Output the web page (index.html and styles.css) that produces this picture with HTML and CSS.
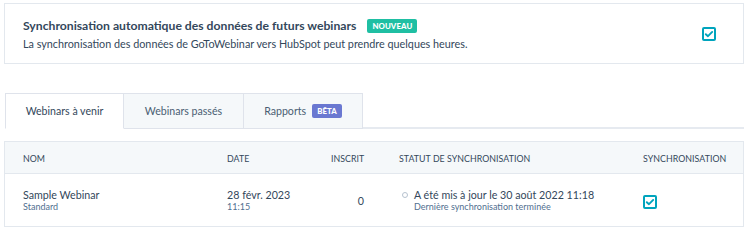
FILE: index.html
```html
<!DOCTYPE html>
<html lang="fr">
<head>
<meta charset="utf-8">
<link rel="stylesheet" href="styles.css">
</head>
<body>
<div class="page">
  <section class="card">
    <div class="card-text">
      <div class="card-title">
        <span>Synchronisation automatique des données de futurs webinars</span>
        <span class="badge badge-new">NOUVEAU</span>
      </div>
      <div class="card-desc">La synchronisation des données de GoToWebinar vers HubSpot peut prendre quelques heures.</div>
    </div>
    <span class="checkbox">
      <svg viewBox="0 0 10 10" width="10" height="10"><path d="M1.8 5.2 L4 7.2 L8.2 2.9" fill="none" stroke="#00a4bd" stroke-width="1.9" stroke-linecap="round" stroke-linejoin="round"/></svg>
    </span>
  </section>

  <nav class="tabs">
    <div class="tab active">Webinars à venir</div>
    <div class="tab">Webinars passés</div>
    <div class="tab">Rapports <span class="badge badge-beta">BÊTA</span></div>
    <div class="tab-fill"></div>
  </nav>

  <div class="table">
    <div class="row head">
      <div class="c-name">NOM</div>
      <div class="c-date">DATE</div>
      <div class="c-ins">INSCRIT</div>
      <div class="c-stat">STATUT DE SYNCHRONISATION</div>
      <div class="c-sync">SYNCHRONISATION</div>
    </div>
    <div class="row body">
      <div class="c-name">
        <div class="main">Sample Webinar</div>
        <div class="sub">Standard</div>
      </div>
      <div class="c-date">
        <div class="main">28 févr. 2023</div>
        <div class="sub">11:15</div>
      </div>
      <div class="c-ins">0</div>
      <div class="c-stat">
        <span class="dot"></span>
        <div>
          <div class="main">A été mis à jour le 30 août 2022 11:18</div>
          <div class="sub">Dernière synchronisation terminée</div>
        </div>
      </div>
      <div class="c-sync">
        <span class="checkbox">
          <svg viewBox="0 0 10 10" width="10" height="10"><path d="M1.8 5.2 L4 7.2 L8.2 2.9" fill="none" stroke="#00a4bd" stroke-width="1.9" stroke-linecap="round" stroke-linejoin="round"/></svg>
        </span>
      </div>
    </div>
  </div>
</div>
</body>
</html>
```

FILE: styles.css
```css
* { box-sizing: border-box; }
html, body { margin: 0; padding: 0; background: #fff; }
body {
  font-family: Lato, "Noto Sans", sans-serif;
  color: #33475b;
  width: 750px;
  height: 231px;
  overflow: hidden;
}
.page { padding: 3px 6px 0 4px; }

.card {
  display: flex;
  align-items: center;
  justify-content: space-between;
  border: 1px solid #e3e8ee;
  height: 61px;
  padding: 0 27px 0 18px;
}
.card-title {
  display: flex;
  align-items: center;
  gap: 11px;
  font-size: 12.2px;
  font-weight: 700;
  line-height: 18px;
  margin-top: 1px;
}
.card-desc {
  font-size: 10.8px;
  line-height: 16px;
  margin-top: 1px;
}
.badge {
  display: inline-block;
  color: #fff;
  font-size: 7.8px;
  font-weight: 900;
  border-radius: 2px;
  line-height: 14px;
  padding: 0 5px;
  letter-spacing: 0.1px;
}
.badge-new { background: #1fbfa3; }
.badge-beta { background: #6a78d1; margin-left: 6px; padding: 0 5px; }

.checkbox {
  display: inline-flex;
  width: 14px;
  height: 14px;
  border: 2px solid #00a4bd;
  border-radius: 2px;
  align-items: center;
  justify-content: center;
  background: #fff;
}

.tabs {
  display: flex;
  margin-top: 29px;
  height: 36px;
  padding-left: 1px;
}
.tab {
  display: flex;
  align-items: center;
  justify-content: center;
  width: 120px;
  background: #f5f8fa;
  border: 1px solid #dfe3eb;
  border-left: none;
  font-size: 10.6px;
  color: #4a5e73;
}
.tab:nth-child(1) { width: 119px; border-left: 1px solid #dfe3eb; }
.tab:nth-child(3) { width: 119px; }
.tab.active {
  background: #fff;
  border-bottom-color: #fff;
  color: #33475b;
}
.tab-fill {
  flex: 1;
  border-bottom: 2px solid #e6eaf0;
}

.table {
  margin-top: 12px;
  border: 1px solid #e3e8ee;
}
.row {
  display: grid;
  grid-template-columns: 204px 104px 33px 279px 1fr;
  padding-left: 18px;
  align-items: center;
}
.row.head {
  height: 32px;
  background: #f5f8fa;
  border-bottom: 1px solid #e3e8ee;
  font-size: 8.8px;
  letter-spacing: 0.05px;
  padding-top: 2px;
}
.row.body { height: 52px; }
.c-ins { text-align: right; }
.row.head .c-stat { padding-left: 35px; }
.row.body .c-stat { display: flex; align-items: flex-start; gap: 6px; padding-left: 38px; }
.main { font-size: 10.7px; line-height: 13px; }
.sub { font-size: 9px; line-height: 12px; color: #516f90; margin-top: 0; }
.row.body .c-ins { font-size: 10.7px; }
.dot {
  width: 6px;
  height: 6px;
  border: 1px solid #b6c2cf;
  border-radius: 50%;
  margin-top: 4px;
}
.row.body .c-sync { padding-top: 1px; }
```
